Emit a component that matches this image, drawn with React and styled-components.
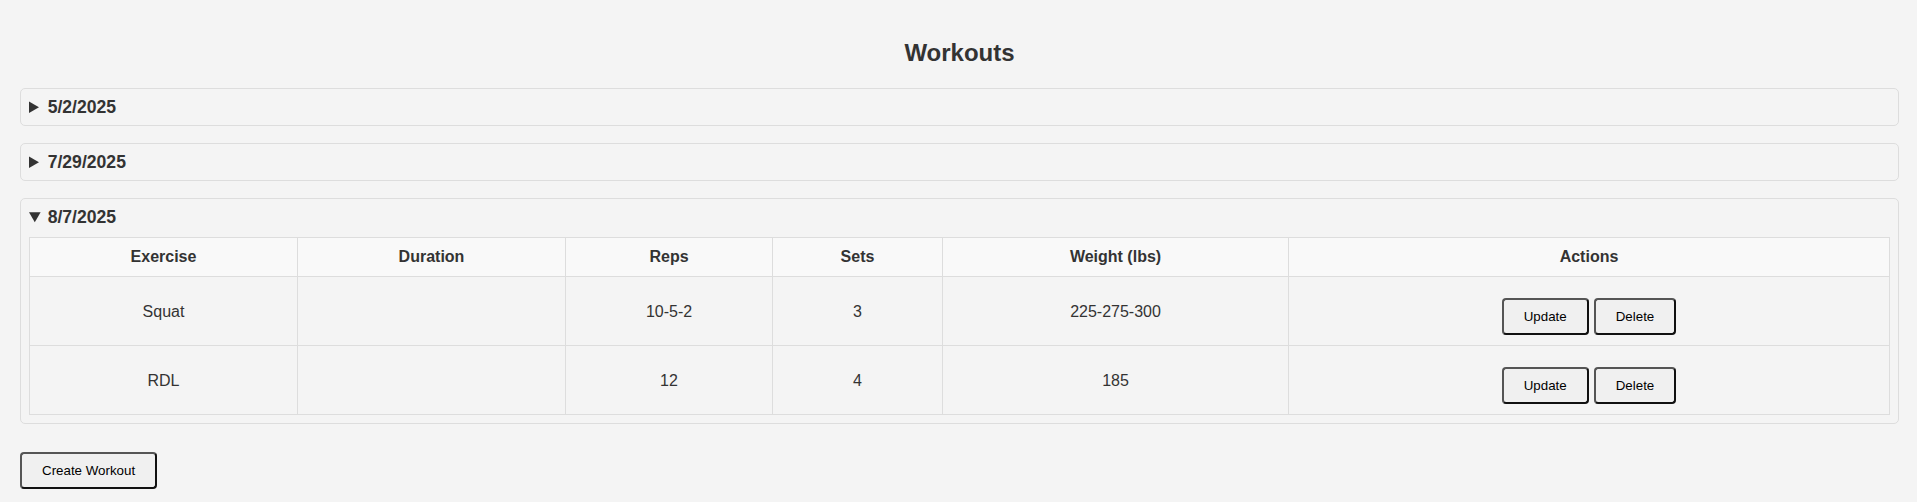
import styled, { createGlobalStyle } from "styled-components";

const GlobalStyle = createGlobalStyle`
  html, body {
    margin: 0;
    padding: 0;
    background: #f4f4f4;
  }
  body {
    font-family: "Liberation Sans", Arial, sans-serif;
    color: #333;
  }
`;

const Page = styled.div`
  padding: 39px 18px 20px 20px;
`;

const Title = styled.h2`
  margin: 0 0 21px;
  font-size: 24px;
  font-weight: bold;
  text-align: center;
  line-height: 28px;
`;

const WorkoutList = styled.div`
  display: flex;
  flex-direction: column;
  gap: 17px;
`;

const Day = styled.details`
  border: 1px solid #ddd;
  border-radius: 5px;
  padding: 8px;
`;

const DayTitle = styled.summary`
  font-size: 17.6px;
  font-weight: bold;
  line-height: 20px;
  cursor: pointer;

  details[open] > & {
    margin-bottom: 10px;
  }
`;

const Table = styled.table`
  width: 100%;
  border-collapse: collapse;
  table-layout: fixed;
`;

const HeadCell = styled.th`
  border: 1px solid #ddd;
  background: #f9f9f9;
  padding: 10px;
  font-size: 16px;
  line-height: 18px;
  text-align: center;
`;

const Cell = styled.td`
  border: 1px solid #ddd;
  padding: 11px 10px 10px;
  font-size: 16px;
  line-height: 18px;
  text-align: center;
  vertical-align: middle;
`;

const Actions = styled.div`
  display: flex;
  justify-content: center;
  gap: 5px;
  padding-top: 10px;
`;

const Button = styled.button`
  font-family: "Liberation Sans", Arial, sans-serif;
  font-size: 13.33px;
  line-height: 15px;
  color: #000;
  background: #f0f0f0;
  padding: 9px 20px;
  border: 2px solid;
  border-color: #555 #111 #111 #555;
  border-radius: 4px;
  cursor: pointer;
`;

const CreateButton = styled(Button)`
  align-self: flex-start;
  margin-top: 11px;
`;

const columns = [
  { label: "Exercise", width: 268 },
  { label: "Duration", width: 268 },
  { label: "Reps", width: 207 },
  { label: "Sets", width: 170 },
  { label: "Weight (lbs)", width: 346 },
  { label: "Actions" },
];

const workouts = [
  { date: "5/2/2025", exercises: [] },
  { date: "7/29/2025", exercises: [] },
  {
    date: "8/7/2025",
    open: true,
    exercises: [
      { name: "Squat", duration: "", reps: "10-5-2", sets: 3, weight: "225-275-300" },
      { name: "RDL", duration: "", reps: "12", sets: 4, weight: "185" },
    ],
  },
];

function App() {
  return (
    <>
      <GlobalStyle />
      <Page>
        <Title>Workouts</Title>
        <WorkoutList>
          {workouts.map((w) => (
            <Day key={w.date} open={w.open}>
              <DayTitle>{w.date}</DayTitle>
              <Table>
                <colgroup>
                  {columns.map((c) => (
                    <col key={c.label} style={c.width ? { width: c.width } : undefined} />
                  ))}
                </colgroup>
                <thead>
                  <tr>
                    {columns.map((c) => (
                      <HeadCell key={c.label}>{c.label}</HeadCell>
                    ))}
                  </tr>
                </thead>
                <tbody>
                  {w.exercises.map((ex) => (
                    <tr key={ex.name}>
                      <Cell>{ex.name}</Cell>
                      <Cell>{ex.duration}</Cell>
                      <Cell>{ex.reps}</Cell>
                      <Cell>{ex.sets}</Cell>
                      <Cell>{ex.weight}</Cell>
                      <Cell>
                        <Actions>
                          <Button>Update</Button>
                          <Button>Delete</Button>
                        </Actions>
                      </Cell>
                    </tr>
                  ))}
                </tbody>
              </Table>
            </Day>
          ))}
          <CreateButton>Create Workout</CreateButton>
        </WorkoutList>
      </Page>
    </>
  );
}

export default App;
